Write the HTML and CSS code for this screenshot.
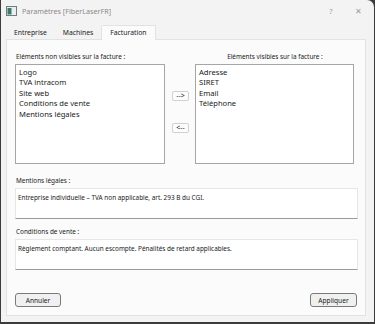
FILE: index.html
```html
<!DOCTYPE html>
<html lang="fr">
<head>
  <meta charset="UTF-8" />
  <meta name="viewport" content="width=device-width, initial-scale=1.0"/>
  <title>Paramètres [FiberLaserFR]</title>
  <link rel="stylesheet" href="styles.css">
</head>
<body>

  <div class="window">
    <div class="titlebar">
      <svg class="app-icon" width="11" height="10" viewBox="0 0 11 10">
        <rect x="0.5" y="0.5" width="10" height="9" fill="#e8eef2" stroke="#6d7d86"/>
        <rect x="1.5" y="2" width="4" height="6.5" fill="#3f7a5a"/>
      </svg>
      <span class="title">Paramètres [FiberLaserFR]</span>
      <span class="tb-btn help">?</span>
      <span class="tb-btn close">✕</span>
    </div>

    <div class="tabs">
      <span class="tab">Entreprise</span>
      <span class="tab">Machines</span>
      <span class="tab active">Facturation</span>
    </div>

    <div class="pane">
      <div class="lists">
        <div class="list-col">
          <div class="label">Eléments non visibles sur la facture :</div>
          <ul class="listbox" id="hidden-list">
            <li>Logo</li>
            <li>TVA intracom</li>
            <li>Site web</li>
            <li>Conditions de vente</li>
            <li>Mentions légales</li>
          </ul>
        </div>

        <div class="move-buttons">
          <button class="small-btn" id="to-visible">--&gt;</button>
          <button class="small-btn" id="to-hidden">&lt;--</button>
        </div>

        <div class="list-col">
          <div class="label centered">Eléments visibles sur la facture :</div>
          <ul class="listbox" id="visible-list">
            <li>Adresse</li>
            <li>SIRET</li>
            <li>Email</li>
            <li>Téléphone</li>
          </ul>
        </div>
      </div>

      <div class="field">
        <div class="label">Mentions légales :</div>
        <div class="textbox">Entreprise individuelle – TVA non applicable, art. 293 B du CGI.</div>
      </div>

      <div class="field">
        <div class="label">Conditions de vente :</div>
        <div class="textbox">Règlement comptant. Aucun escompte. Pénalités de retard applicables.</div>
      </div>

      <div class="footer">
        <button class="dlg-btn">Annuler</button>
        <button class="dlg-btn">Appliquer</button>
      </div>
    </div>
  </div>

</body>
</html>
```

FILE: styles.css
```css
* {
  box-sizing: border-box;
}

body {
  margin: 0;
  background-color: #3c3c3c;
  font-family: "Noto Sans", "Open Sans", sans-serif;
  font-size: 6.4px;
  color: #1a1a1a;
}

.window {
  width: 373px;
  height: 322px;
  margin-left: 1px;
  background-color: #f3f3f3;
  border-top-right-radius: 7px;
  display: flex;
  flex-direction: column;
}

/* title bar */
.titlebar {
  height: 21px;
  display: flex;
  align-items: center;
  padding: 0 0 0 5px;
}

.app-icon {
  margin-right: 5px;
}

.title {
  flex: 1;
  color: #8a8a8a;
  font-size: 7.2px;
}

.tb-btn {
  color: #9a9a9a;
  font-size: 7.5px;
  text-align: center;
}

.help {
  width: 14px;
  margin-right: 13px;
}

.close {
  width: 14px;
  margin-right: 9px;
}

/* tabs */
.tabs {
  height: 18px;
  display: flex;
  align-items: flex-end;
  padding-left: 5px;
  font-size: 6.8px;
}

.tab {
  height: 14px;
  line-height: 15px;
  padding: 0 8px;
  color: #1a1a1a;
}

.tab.active {
  height: 15px;
  line-height: 14px;
  background-color: #fbfbfb;
  border: 1px solid #e2e2e2;
  border-bottom: none;
  border-radius: 2px 2px 0 0;
  margin-bottom: -1px;
  position: relative;
  z-index: 1;
}

.pane {
  flex: 1;
  margin: 0 8px 6px 5px;
  background-color: #fbfbfb;
  border: 1px solid #e2e2e2;
  padding: 12px 8px 0 8px;
  display: flex;
  flex-direction: column;
}

.label {
  height: 12px;
  line-height: 10px;
  padding-left: 1px;
}

.label.centered {
  text-align: center;
}

/* the two lists */
.lists {
  display: flex;
  align-items: flex-start;
}

.list-col {
  display: flex;
  flex-direction: column;
}

.list-col:first-child .listbox {
  width: 150px;
}

.list-col:last-child .listbox {
  width: 159px;
}

.listbox {
  list-style: none;
  margin: 0;
  height: 100px;
  padding: 2px 3px;
  background-color: #fff;
  border: 1px solid #a6a6a6;
  font-size: 7.6px;
}

.listbox li {
  line-height: 10.4px;
}

.move-buttons {
  width: 30px;
  padding: 39px 0 0 7px;
  display: flex;
  flex-direction: column;
  gap: 22px;
}

.small-btn {
  width: 17px;
  height: 10px;
  padding: 0;
  font-family: inherit;
  font-size: 7px;
  line-height: 8px;
  color: #333;
  background-color: #fdfdfd;
  border: 1px solid #d0d0d0;
  border-radius: 2px;
}

/* text fields */
.field {
  margin-top: 12px;
}

.field + .field {
  margin-top: 8px;
}

.textbox {
  width: 343px;
  height: 31px;
  padding: 4px 2px;
  background-color: #fff;
  border: 1px solid #e6e6e6;
  border-bottom: 1px solid #9a9a9a;
  line-height: 10px;
}

.footer {
  margin-top: auto;
  margin-bottom: 8px;
  display: flex;
  justify-content: space-between;
}

.dlg-btn {
  width: 46px;
  height: 14px;
  padding: 0;
  font-family: inherit;
  font-size: 6.6px;
  color: #1a1a1a;
  background-color: #f0f0f0;
  border: 1px solid #7a7a7a;
  border-radius: 3px;
}

.dlg-btn:last-child {
  width: 47px;
}
```
